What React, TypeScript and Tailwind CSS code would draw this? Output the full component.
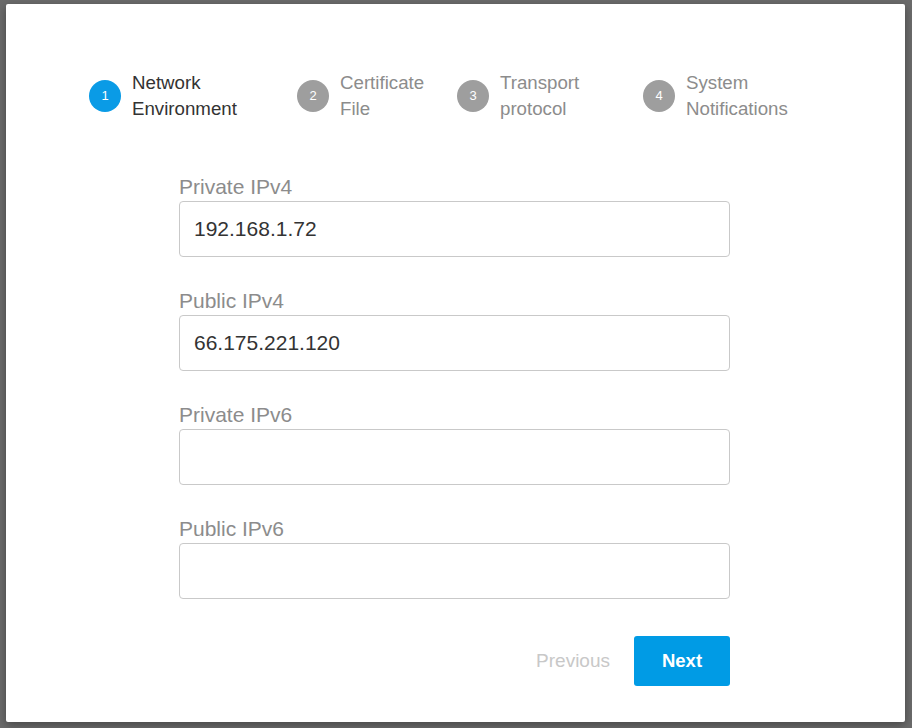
import { useState } from 'react';

const steps = [
    { n: 1, lines: ['Network', 'Environment'], width: 'w-[208px]' },
    { n: 2, lines: ['Certificate', 'File'], width: 'w-[160px]' },
    { n: 3, lines: ['Transport', 'protocol'], width: 'w-[186px]' },
    { n: 4, lines: ['System', 'Notifications'], width: 'w-[200px]' },
];

const fields = [
    { label: 'Private IPv4', value: '192.168.1.72' },
    { label: 'Public IPv4', value: '66.175.221.120' },
    { label: 'Private IPv6', value: '' },
    { label: 'Public IPv6', value: '' },
];

export default function App() {
    const [current] = useState(1);
    const [values, setValues] = useState(fields.map((f) => f.value));

    return (
        <div
            className="h-[728px] w-[912px] overflow-hidden bg-[#6b6b6b] pl-[6px] pt-[4px]"
            style={{ fontFamily: '"Liberation Sans", Arial, sans-serif' }}
        >
            <div className="flex h-[718px] w-[899px] flex-col rounded-[2px] bg-white shadow-[0_3px_10px_rgba(0,0,0,0.35)]">
                {/* Steps */}
                <div className="flex items-center pl-[83px] pt-[66px]">
                    {steps.map((s) => {
                        const active = s.n === current;
                        return (
                            <div key={s.n} className={`flex items-center ${s.width}`}>
                                <div
                                    className={`flex h-[32px] w-[32px] shrink-0 items-center justify-center rounded-full text-[13px] text-white ${active ? 'bg-[#0a9be6]' : 'bg-[#9e9e9e]'
                                        }`}
                                >
                                    {s.n}
                                </div>
                                <div
                                    className={`ml-[11px] text-[18.7px] leading-[26px] ${active ? 'text-[#333333]' : 'text-[#8c8c8c]'
                                        }`}
                                >
                                    {s.lines.map((l) => (
                                        <div key={l}>{l}</div>
                                    ))}
                                </div>
                            </div>
                        );
                    })}
                </div>

                {/* Form */}
                <div className="ml-[173px] mt-[53px] flex w-[551px] flex-col gap-[32px]">
                    {fields.map((f, i) => (
                        <div key={f.label} className="flex flex-col">
                            <label className="mb-[2px] text-[21px] leading-[24px] text-[#8c8c8c]">{f.label}</label>
                            <input
                                value={values[i]}
                                onChange={(e) => {
                                    const next = [...values];
                                    next[i] = e.target.value;
                                    setValues(next);
                                }}
                                className="h-[56px] w-full rounded-[4px] border border-[#c9c9c9] px-[14px] text-[21px] text-[#333333] outline-none"
                            />
                        </div>
                    ))}
                </div>

                {/* Actions */}
                <div className="ml-[173px] mt-[37px] flex w-[551px] items-center justify-end gap-[24px]">
                    <button className="text-[19px] text-[#c8c8c8]">Previous</button>
                    <button className="h-[50px] w-[96px] rounded-[3px] bg-[#009be5] text-[18.5px] font-bold text-white">
                        Next
                    </button>
                </div>
            </div>
        </div>
    );
}
